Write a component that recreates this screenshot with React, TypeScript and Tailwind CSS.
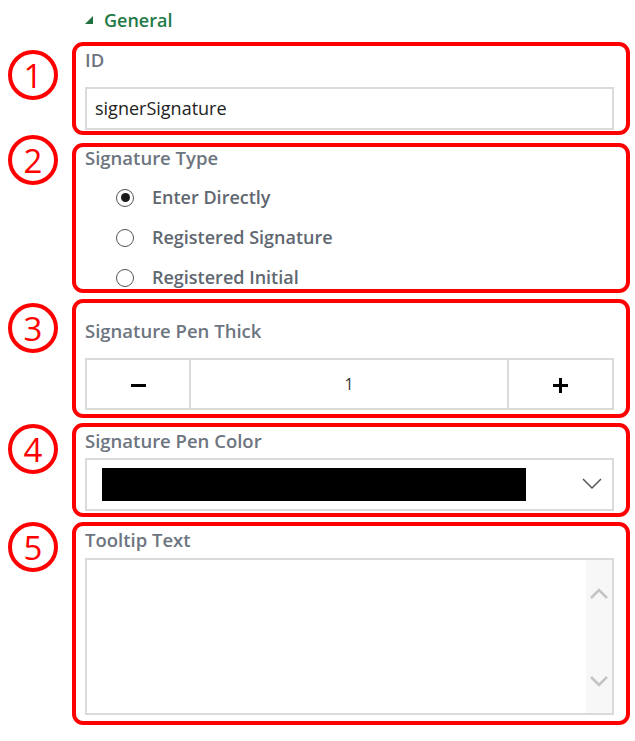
import { ReactNode } from "react";

function Marker({ n }: { n: number }) {
  return (
    <div className="w-[50px] h-[50px] rounded-full border-[4px] border-[#ff0000] flex items-center justify-center text-[#ff0000] text-[33px] leading-none font-normal">
      {n}
    </div>
  );
}

function Row({ n, top, box, children }: { n: number; top: string; box: string; children: ReactNode }) {
  return (
    <div className="flex">
      <div className={`w-[72px] pl-[8px] ${top}`}>
        <Marker n={n} />
      </div>
      <div className={`w-[558px] border-[4px] border-[#ff0000] rounded-[11px] pl-[9px] pr-[12px] ${box}`}>
        {children}
      </div>
    </div>
  );
}

function Label({ children }: { children: ReactNode }) {
  return <div className="text-[18.5px] font-semibold text-[#6d7580] leading-none">{children}</div>;
}

function Radio({ checked, label }: { checked?: boolean; label: string }) {
  return (
    <div className="flex items-center h-[40px] pl-[31px]">
      <span className="w-[18px] h-[18px] rounded-full border border-[#555] flex items-center justify-center bg-white">
        {checked && <span className="w-[9px] h-[9px] rounded-full bg-[#1a1a1a]" />}
      </span>
      <span className="ml-[18px] text-[18px] font-semibold text-[#5f6770]">{label}</span>
    </div>
  );
}

export default function App() {
  return (
    <div className="w-[635px] h-[741px] bg-white font-['Open_Sans',sans-serif] pt-[8px]">
      <div className="flex items-center h-[24px] pl-[85px] gap-[11px]">
        <svg width="8" height="8" viewBox="0 0 8 8">
          <polygon points="8,0 8,8 0,8" fill="#1f6f3f" />
        </svg>
        <span className="text-[18px] font-semibold text-[#1f7a46]">General</span>
      </div>

      <div className="mt-[10px] flex flex-col">
        <Row n={1} top="pt-[8px]" box="h-[93px] pt-[5px]">
          <Label>ID</Label>
          <div className="mt-[17px] h-[43px] border-2 border-[#dadada] flex items-center pl-[8px] text-[18px] text-[#222]">
            signerSignature
          </div>
        </Row>

        <Row n={2} top="pt-0" box="mt-[8px] h-[150px] pt-[2px]">
          <Label>Signature Type</Label>
          <div className="mt-[10px]">
            <Radio checked label="Enter Directly" />
            <Radio label="Registered Signature" />
            <Radio label="Registered Initial" />
          </div>
        </Row>

        <Row n={3} top="pt-[10px]" box="mt-[6px] h-[119px] pt-[19px]">
          <Label>Signature Pen Thick</Label>
          <div className="mt-[17px] h-[52px] border-2 border-[#dadada] flex">
            <div className="w-[104px] border-r-2 border-[#dadada] flex items-center justify-center">
              <div className="w-[15px] h-[3px] bg-black mt-[3px]" />
            </div>
            <div className="flex-1 flex items-center justify-center text-[16px] text-[#333]">1</div>
            <div className="w-[105px] border-l-2 border-[#dadada] flex items-center justify-center">
              <svg width="17" height="17" viewBox="0 0 17 17" className="mt-[3px]">
                <path d="M8.5 1v15M1 8.5h15" stroke="#000" strokeWidth="3" />
              </svg>
            </div>
          </div>
        </Row>

        <Row n={4} top="pt-[6px]" box="mt-[5px] h-[94px] pt-[5px] pr-[9px]">
          <Label>Signature Pen Color</Label>
          <div className="mt-[7px] h-[53px] border-2 border-[#dadada] flex items-center pl-[15px] pr-[10px]">
            <div className="w-[424px] h-[33px] bg-black" />
            <svg className="ml-auto" width="20" height="12" viewBox="0 0 20 12">
              <polyline points="1,1 10,10 19,1" fill="none" stroke="#555" strokeWidth="1.5" />
            </svg>
          </div>
        </Row>

        <Row n={5} top="pt-[5px]" box="mt-[5px] h-[203px] pt-[5px]">
          <Label>Tooltip Text</Label>
          <div className="mt-[8px] h-[157px] border-2 border-[#dadada] flex">
            <div className="flex-1" />
            <div className="w-[26px] bg-[#f7f7f7] flex flex-col items-center justify-between pt-[28px] pb-[26px]">
              <svg width="18" height="11" viewBox="0 0 18 11">
                <polyline points="1,10 9,2 17,10" fill="none" stroke="#c4c4c4" strokeWidth="2.5" />
              </svg>
              <svg width="18" height="11" viewBox="0 0 18 11">
                <polyline points="1,1 9,9 17,1" fill="none" stroke="#c4c4c4" strokeWidth="2.5" />
              </svg>
            </div>
          </div>
        </Row>
      </div>
    </div>
  );
}
